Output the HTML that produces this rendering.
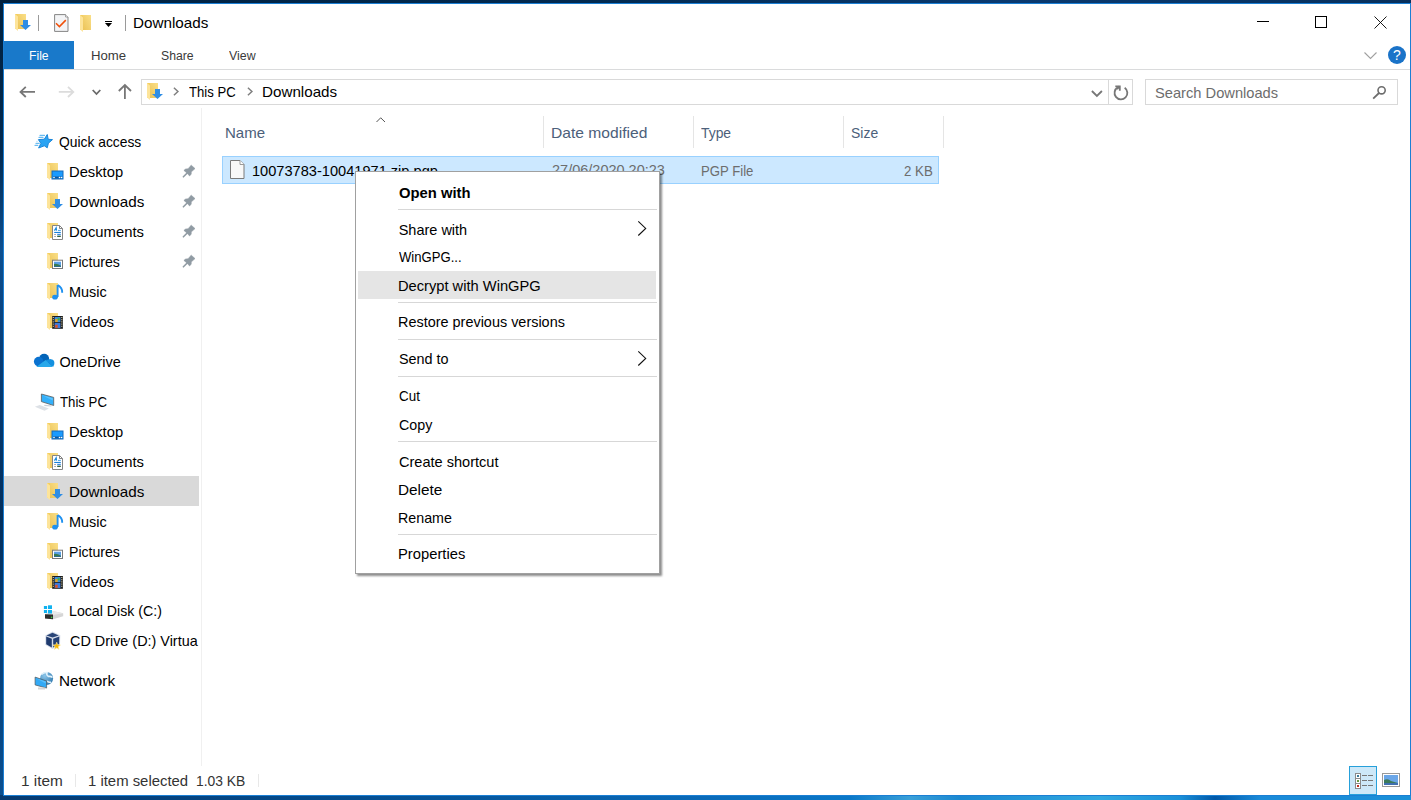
<!DOCTYPE html>
<html><head><meta charset="utf-8"><style>
html,body{margin:0;padding:0}
body{width:1411px;height:800px;overflow:hidden;position:relative;font-family:"Liberation Sans",sans-serif;
background:#02264a}
.t{position:absolute;line-height:0;white-space:nowrap}
svg{overflow:visible}
</style></head><body>
<div style="position:absolute;left:0;top:0;width:3px;height:800px;background:linear-gradient(180deg,#01213f 0px,#022a50 150px,#0d4f90 250px,#083e78 350px,#022e5c 520px,#063a70 600px,#0a4f90 800px)"></div>
<div style="position:absolute;left:0;top:0;width:1411px;height:3px;background:linear-gradient(90deg,#01213f 0px,#022a50 600px,#0a3a70 1000px,#07305c 1411px)"></div>
<div style="position:absolute;left:0;top:795px;width:1411px;height:5px;background:linear-gradient(90deg,#063a70 0px,#044a8a 300px,#0a6ab8 700px,#0a78c8 850px,#3aa0d8 910px,#1a88d0 960px,#30a8e0 1100px,#1a90d8 1180px,#0058a8 1215px,#1a8ad8 1260px,#1a90d8 1411px)"></div>
<svg width="0" height="0" style="position:absolute"><defs><linearGradient id="fgrad" x1="1" y1="0" x2="0" y2="1"><stop offset="0" stop-color="#fadf88"/><stop offset="1" stop-color="#ecc458"/></linearGradient></defs></svg>
<div style="position:absolute;left:3px;top:3px;width:1406px;height:791px;background:#fff;border:1px solid #1b7fd4"></div>
<svg style="position:absolute;left:15px;top:14px" width="17" height="18" viewBox="0 0 17 18"><rect x="0" y="0" width="11" height="15" fill="#f4cf62"/>
<rect x="3" y="0" width="8" height="15" fill="url(#fgrad)"/>
<polygon points="0,0 3,2.5 3,17 0,14.5" fill="#fde49a"/>
<polygon points="8,6 13,6 13,11 16,11 10.5,16 5,11 8,11" fill="#2f8de4"/></svg>
<div style="position:absolute;left:38px;top:15px;width:1px;height:16px;background:#9a9a9a"></div>
<svg style="position:absolute;left:54px;top:14px" width="15" height="18" viewBox="0 0 15 18"><path d="M0.6,0.6 H11.6 L14,3 V17.4 H0.6 Z" fill="#f3f4f6" stroke="#858585" stroke-width="1"/><path d="M11.6,0.6 V3 H14" fill="#fff" stroke="#858585" stroke-width="0.8"/><path d="M2,9.3 L5.4,12.6 L11.8,6.1" fill="none" stroke="#f0500a" stroke-width="1.5"/></svg>
<svg style="position:absolute;left:80px;top:15px" width="13" height="18" viewBox="0 0 13 18"><rect x="0" y="0" width="11" height="15" fill="#f4cf62"/><rect x="3" y="0" width="8" height="15" fill="url(#fgrad)"/><polygon points="0,0 3,2.5 3,17 0,14.5" fill="#fde49a"/></svg>
<div style="position:absolute;left:105px;top:21px;width:7px;height:1px;background:#000"></div>
<svg style="position:absolute;left:105px;top:23px" width="7" height="4" viewBox="0 0 7 4"><polygon points="0,0 7,0 3.5,4" fill="#000"/></svg>
<div style="position:absolute;left:125px;top:15px;width:1px;height:16px;background:#9a9a9a"></div>
<div class="t" style="left:132.81px;top:22.80px;font-size:15px;color:#000;font-weight:normal;transform:scaleX(1.0154);transform-origin:0 0;">Downloads</div>
<div style="position:absolute;left:1257px;top:21px;width:12px;height:1px;background:#000"></div>
<div style="position:absolute;left:1315px;top:16px;width:12px;height:12px;border:1px solid #000;box-sizing:border-box"></div>
<svg style="position:absolute;left:1374px;top:16px" width="13" height="13" viewBox="0 0 13 13"><path d="M0.5,0.5 L12.5,12.5 M12.5,0.5 L0.5,12.5" stroke="#000" stroke-width="0.9"/></svg>
<div style="position:absolute;left:4px;top:41px;width:70px;height:28px;background:#1979ca"></div>
<div class="t" style="left:28.72px;top:55.67px;font-size:12.5px;color:#fff;font-weight:normal;transform:scaleX(0.9738);transform-origin:0 0;">File</div>
<div class="t" style="left:90.63px;top:55.67px;font-size:12.5px;color:#3a3a3a;font-weight:normal;transform:scaleX(1.0549);transform-origin:0 0;">Home</div>
<div class="t" style="left:161.00px;top:55.67px;font-size:12.5px;color:#3a3a3a;font-weight:normal;transform:scaleX(0.9784);transform-origin:0 0;">Share</div>
<div class="t" style="left:228.66px;top:55.67px;font-size:12.5px;color:#3a3a3a;font-weight:normal;transform:scaleX(0.9896);transform-origin:0 0;">View</div>
<div style="position:absolute;left:4px;top:69px;width:1406px;height:1px;background:#dadbdc"></div>
<svg style="position:absolute;left:1364px;top:52px" width="14" height="8" viewBox="0 0 14 8"><path d="M0.5,0.5 L6.5,6.5 L12.5,0.5" fill="none" stroke="#a0a0a0" stroke-width="1.1"/></svg>
<svg style="position:absolute;left:1388px;top:46px" width="18" height="18" viewBox="0 0 18 18"><circle cx="9" cy="9" r="9" fill="#1a73c8"/><text x="9" y="14" text-anchor="middle" font-family="Liberation Sans" font-size="14" font-weight="normal" fill="#fff">?</text></svg>
<svg style="position:absolute;left:19px;top:86px" width="17" height="12" viewBox="0 0 17 12"><path d="M1.5,5.9 H16 M6.8,0.8 L1.5,5.9 L6.8,11" fill="none" stroke="#777" stroke-width="1.8"/></svg>
<svg style="position:absolute;left:58px;top:86px" width="17" height="12" viewBox="0 0 17 12"><path d="M0.8,5.9 H15.3 M10,0.8 L15.3,5.9 L10,11" fill="none" stroke="#dcdcdc" stroke-width="1.8"/></svg>
<svg style="position:absolute;left:92px;top:89px" width="9" height="7" viewBox="0 0 9 7"><path d="M0.7,1 L4.5,5 L8.3,1" fill="none" stroke="#6a6a6a" stroke-width="1.8"/></svg>
<svg style="position:absolute;left:117px;top:83px" width="15" height="16" viewBox="0 0 15 16"><path d="M7.9,16 V2 M1.8,8 L7.9,2 L14,8" fill="none" stroke="#777" stroke-width="1.8"/></svg>
<div style="position:absolute;left:141px;top:79px;width:992px;height:26px;border:1px solid #d9d9d9;box-sizing:border-box"></div>
<div style="position:absolute;left:1108px;top:79px;width:1px;height:26px;background:#d9d9d9"></div>
<svg style="position:absolute;left:147px;top:83px" width="17" height="18" viewBox="0 0 17 18"><rect x="0" y="0" width="11" height="15" fill="#f4cf62"/>
<rect x="3" y="0" width="8" height="15" fill="url(#fgrad)"/>
<polygon points="0,0 3,2.5 3,17 0,14.5" fill="#fde49a"/>
<polygon points="8,6 13,6 13,11 16,11 10.5,16 5,11 8,11" fill="#2f8de4"/></svg>
<svg style="position:absolute;left:173px;top:87px" width="6" height="9" viewBox="0 0 6 9"><path d="M0.9,0.8 L4.9,4.5 L0.9,8.2" fill="none" stroke="#808080" stroke-width="1.5"/></svg>
<div class="t" style="left:189.32px;top:91.97px;font-size:14.5px;color:#000;font-weight:normal;transform:scaleX(0.9037);transform-origin:0 0;">This PC</div>
<svg style="position:absolute;left:247px;top:87px" width="6" height="9" viewBox="0 0 6 9"><path d="M0.9,0.8 L4.9,4.5 L0.9,8.2" fill="none" stroke="#808080" stroke-width="1.5"/></svg>
<div class="t" style="left:262.44px;top:91.97px;font-size:14.5px;color:#000;font-weight:normal;transform:scaleX(1.0475);transform-origin:0 0;">Downloads</div>
<svg style="position:absolute;left:1091px;top:90px" width="12" height="8" viewBox="0 0 12 8"><path d="M0.9,1 L5.9,6 L10.9,1" fill="none" stroke="#777" stroke-width="1.8"/></svg>
<svg style="position:absolute;left:1110px;top:80px" width="22" height="22" viewBox="0 0 22 22"><path d="M14.67,7.76 A6.4,6.4 0 1 1 7.8,7.4" fill="none" stroke="#777" stroke-width="1.8"/><path d="M5.3,6.3 H9.8 V10.8" fill="none" stroke="#777" stroke-width="1.8"/><path d="M9.5,6.5 L7,9" stroke="#777" stroke-width="1.8"/></svg>
<div style="position:absolute;left:1145px;top:79px;width:253px;height:26px;border:1px solid #d9d9d9;box-sizing:border-box"></div>
<div class="t" style="left:1154.98px;top:92.77px;font-size:14.5px;color:#6d6d6d;font-weight:normal;transform:scaleX(1.0115);transform-origin:0 0;">Search Downloads</div>
<svg style="position:absolute;left:1372px;top:86px" width="14" height="14" viewBox="0 0 14 14"><circle cx="9.6" cy="4.3" r="3.6" fill="none" stroke="#6d6d6d" stroke-width="1.6"/><path d="M7,7 L1.2,12.6" stroke="#6d6d6d" stroke-width="1.8"/></svg>
<div style="position:absolute;left:201px;top:108px;width:1px;height:658px;background:#f0f0f0"></div>
<div style="position:absolute;left:4px;top:476px;width:195px;height:30px;background:#d9d9d9"></div>
<svg style="position:absolute;left:32px;top:131px" width="24" height="20" viewBox="0 0 24 20"><polygon points="15.25,3.5 16.2,8.3 20.5,8.6 16.4,12.2 15.25,16.8 12.3,14.8 6.6,17 8.9,12.4 6.4,8.6 12.3,8.2" fill="#29a3f3" stroke="#1b86d9" stroke-width="1" stroke-linejoin="round"/><path d="M8,4.4 H12.5 M7,6.4 H11 M4,12.4 H7.2 M3,14.4 H5.8" stroke="#6bbcf0" stroke-width="1.1" stroke-linecap="round"/><circle cx="5" cy="10.3" r="0.6" fill="#a8d6f5"/></svg>
<div class="t" style="left:59.15px;top:141.97px;font-size:14.5px;color:#000;font-weight:normal;transform:scaleX(0.9538);transform-origin:0 0;">Quick access</div>
<svg style="position:absolute;left:47px;top:163px" width="17" height="18" viewBox="0 0 17 18"><rect x="0" y="0" width="11" height="15" fill="#f4cf62"/>
<rect x="3" y="0" width="8" height="15" fill="url(#fgrad)"/>
<polygon points="0,0 3,2.5 3,17 0,14.5" fill="#fde49a"/>
<rect x="5" y="8" width="11" height="8" fill="#1a9bff" stroke="#1569b8" stroke-width="1"/><rect x="6" y="13.5" width="9" height="2" fill="#0f5aa0"/><circle cx="7" cy="14.5" r="0.8" fill="#fff"/><circle cx="12.5" cy="14.5" r="0.8" fill="#fff"/><circle cx="14.5" cy="14.5" r="0.8" fill="#fff"/></svg>
<div class="t" style="left:68.98px;top:171.97px;font-size:14.5px;color:#000;font-weight:normal;transform:scaleX(1.0167);transform-origin:0 0;">Desktop</div>
<svg style="position:absolute;left:176px;top:162px" width="24" height="20" viewBox="0 0 24 20"><polygon points="15.25,3.2 19,6.6 15.2,10 15.2,12.3 13.5,13.9 11.2,11.2 10,10.2 7.9,8.4 9.5,7.1 12.2,6.8 14,4.4" fill="#909ba3" stroke="#909ba3" stroke-width="0.6" stroke-linejoin="round"/><path d="M11.2,11 L7.4,14.8" stroke="#909ba3" stroke-width="1.6" stroke-linecap="round"/></svg>
<svg style="position:absolute;left:47px;top:193px" width="17" height="18" viewBox="0 0 17 18"><rect x="0" y="0" width="11" height="15" fill="#f4cf62"/>
<rect x="3" y="0" width="8" height="15" fill="url(#fgrad)"/>
<polygon points="0,0 3,2.5 3,17 0,14.5" fill="#fde49a"/>
<polygon points="8,6 13,6 13,11 16,11 10.5,16 5,11 8,11" fill="#2f8de4"/></svg>
<div class="t" style="left:68.95px;top:201.97px;font-size:14.5px;color:#000;font-weight:normal;transform:scaleX(1.0499);transform-origin:0 0;">Downloads</div>
<svg style="position:absolute;left:176px;top:192px" width="24" height="20" viewBox="0 0 24 20"><polygon points="15.25,3.2 19,6.6 15.2,10 15.2,12.3 13.5,13.9 11.2,11.2 10,10.2 7.9,8.4 9.5,7.1 12.2,6.8 14,4.4" fill="#909ba3" stroke="#909ba3" stroke-width="0.6" stroke-linejoin="round"/><path d="M11.2,11 L7.4,14.8" stroke="#909ba3" stroke-width="1.6" stroke-linecap="round"/></svg>
<svg style="position:absolute;left:47px;top:223px" width="17" height="18" viewBox="0 0 17 18"><rect x="0" y="0" width="11" height="15" fill="#f4cf62"/>
<rect x="3" y="0" width="8" height="15" fill="url(#fgrad)"/>
<polygon points="0,0 3,2.5 3,17 0,14.5" fill="#fde49a"/>
<path d="M5.5,2.5 H12.5 L15.5,5.5 V16.5 H5.5 Z" fill="#fff" stroke="#858585"/><path d="M12.5,2.5 V5.5 H15.5" fill="none" stroke="#858585"/><path d="M7.4,7.6 L9.2,4.6 L9.6,7.6 M8,6.6 H10" stroke="#1e8ad8" stroke-width="1.1" fill="none"/><rect x="11" y="6.9" width="2.8" height="1" fill="#40a0e8"/><rect x="7.2" y="8.9" width="6.6" height="1.1" fill="#1a80d8"/><rect x="7.2" y="11" width="1.7" height="1" fill="#a0a0a0"/><rect x="7.2" y="13" width="1.7" height="1" fill="#a0a0a0"/><rect x="10.2" y="10.8" width="3.6" height="1.2" fill="#3a8ae8"/><rect x="10.2" y="12.6" width="3.6" height="1.4" fill="#2f5f40"/></svg>
<div class="t" style="left:68.98px;top:231.97px;font-size:14.5px;color:#000;font-weight:normal;transform:scaleX(1.0218);transform-origin:0 0;">Documents</div>
<svg style="position:absolute;left:176px;top:222px" width="24" height="20" viewBox="0 0 24 20"><polygon points="15.25,3.2 19,6.6 15.2,10 15.2,12.3 13.5,13.9 11.2,11.2 10,10.2 7.9,8.4 9.5,7.1 12.2,6.8 14,4.4" fill="#909ba3" stroke="#909ba3" stroke-width="0.6" stroke-linejoin="round"/><path d="M11.2,11 L7.4,14.8" stroke="#909ba3" stroke-width="1.6" stroke-linecap="round"/></svg>
<svg style="position:absolute;left:47px;top:253px" width="17" height="18" viewBox="0 0 17 18"><rect x="0" y="0" width="11" height="15" fill="#f4cf62"/>
<rect x="3" y="0" width="8" height="15" fill="url(#fgrad)"/>
<polygon points="0,0 3,2.5 3,17 0,14.5" fill="#fde49a"/>
<rect x="5.5" y="7.2" width="10" height="8.3" fill="#fff" stroke="#7a7a7a"/><rect x="7" y="8.7" width="7" height="5.3" fill="#5aa0e6"/><path d="M7,11 Q9.5,10 14,12.8 V14 H7 Z" fill="#3a7a50"/><rect x="7" y="13.2" width="7" height="0.8" fill="#2a6a9a"/></svg>
<div class="t" style="left:69.03px;top:261.97px;font-size:14.5px;color:#000;font-weight:normal;transform:scaleX(0.9713);transform-origin:0 0;">Pictures</div>
<svg style="position:absolute;left:176px;top:252px" width="24" height="20" viewBox="0 0 24 20"><polygon points="15.25,3.2 19,6.6 15.2,10 15.2,12.3 13.5,13.9 11.2,11.2 10,10.2 7.9,8.4 9.5,7.1 12.2,6.8 14,4.4" fill="#909ba3" stroke="#909ba3" stroke-width="0.6" stroke-linejoin="round"/><path d="M11.2,11 L7.4,14.8" stroke="#909ba3" stroke-width="1.6" stroke-linecap="round"/></svg>
<svg style="position:absolute;left:47px;top:283px" width="17" height="18" viewBox="0 0 17 18"><rect x="0" y="0" width="11" height="15" fill="#f4cf62"/>
<rect x="3" y="0" width="8" height="15" fill="url(#fgrad)"/>
<polygon points="0,0 3,2.5 3,17 0,14.5" fill="#fde49a"/>
<path d="M10.6,2 V14" stroke="#1e90f0" stroke-width="1.9"/><ellipse cx="8" cy="14.2" rx="2.8" ry="2.4" fill="#1e90f0"/><path d="M10.6,2.2 Q15.5,4.5 15.2,9.8" stroke="#1e90f0" stroke-width="1.9" fill="none"/></svg>
<div class="t" style="left:69.00px;top:291.97px;font-size:14.5px;color:#000;font-weight:normal;transform:scaleX(0.9967);transform-origin:0 0;">Music</div>
<svg style="position:absolute;left:47px;top:313px" width="17" height="18" viewBox="0 0 17 18"><rect x="0" y="0" width="11" height="15" fill="#f4cf62"/>
<rect x="3" y="0" width="8" height="15" fill="url(#fgrad)"/>
<polygon points="0,0 3,2.5 3,17 0,14.5" fill="#fde49a"/>
<rect x="5.2" y="3" width="10.7" height="12.8" fill="#1e1e1e"/><rect x="7.6" y="4" width="5.8" height="5.2" fill="#3a8ae0"/><rect x="8.2" y="6" width="2.5" height="3" fill="#e0a020"/><rect x="10.7" y="4.8" width="2" height="2.5" fill="#40b040"/><rect x="7.6" y="10" width="5.8" height="5" fill="#3a7ae0"/><rect x="8.2" y="11.8" width="2.5" height="3" fill="#e05020"/><path d="M6.3,4 V15 M14.8,4 V15" stroke="#e8e0b0" stroke-width="1" stroke-dasharray="1,1.2"/></svg>
<div class="t" style="left:70.00px;top:321.97px;font-size:14.5px;color:#000;font-weight:normal;transform:scaleX(0.9963);transform-origin:0 0;">Videos</div>
<svg style="position:absolute;left:30px;top:348px" width="26" height="22" viewBox="0 0 26 22"><circle cx="14.1" cy="10.9" r="5.1" fill="#0364b8"/><circle cx="8.7" cy="13.6" r="4.8" fill="#0a72d0"/><circle cx="20.6" cy="15" r="3.8" fill="#1490df"/><rect x="8.5" y="14" width="12" height="4.9" fill="#0a72d0"/><path d="M15.6,11.9 L20.6,11.2 L23.4,15 L23.4,18.9 Z" fill="#1490df"/><path d="M15.6,11.9 L6.2,18.9 H22.6 Z" fill="#28a8ea"/></svg>
<div class="t" style="left:59.51px;top:361.97px;font-size:14.5px;color:#000;font-weight:normal;">OneDrive</div>
<svg style="position:absolute;left:34px;top:393px" width="22" height="19" viewBox="0 0 22 19"><path d="M0.9,13.8 L5.7,11.9 L14.8,15.5 L10.6,17.7 Z" fill="#dde1e6"/><path d="M10.3,11.8 L17.4,12.6 V13.6 L10.3,13 Z" fill="#c9d0d8"/><path d="M7.4,1 L19.7,4.4 V12.5 L7.4,8.6 Z" fill="#33b0fa" stroke="#5a5a5a" stroke-width="0.8" stroke-linejoin="round"/><path d="M8.4,2.3 L18.8,5.2 V7.5 Z" fill="#5cc4ff"/></svg>
<div class="t" style="left:59.51px;top:401.97px;font-size:14.5px;color:#000;font-weight:normal;transform:scaleX(0.9099);transform-origin:0 0;">This PC</div>
<svg style="position:absolute;left:47px;top:423px" width="17" height="18" viewBox="0 0 17 18"><rect x="0" y="0" width="11" height="15" fill="#f4cf62"/>
<rect x="3" y="0" width="8" height="15" fill="url(#fgrad)"/>
<polygon points="0,0 3,2.5 3,17 0,14.5" fill="#fde49a"/>
<rect x="5" y="8" width="11" height="8" fill="#1a9bff" stroke="#1569b8" stroke-width="1"/><rect x="6" y="13.5" width="9" height="2" fill="#0f5aa0"/><circle cx="7" cy="14.5" r="0.8" fill="#fff"/><circle cx="12.5" cy="14.5" r="0.8" fill="#fff"/><circle cx="14.5" cy="14.5" r="0.8" fill="#fff"/></svg>
<div class="t" style="left:68.98px;top:431.97px;font-size:14.5px;color:#000;font-weight:normal;transform:scaleX(1.0167);transform-origin:0 0;">Desktop</div>
<svg style="position:absolute;left:47px;top:453px" width="17" height="18" viewBox="0 0 17 18"><rect x="0" y="0" width="11" height="15" fill="#f4cf62"/>
<rect x="3" y="0" width="8" height="15" fill="url(#fgrad)"/>
<polygon points="0,0 3,2.5 3,17 0,14.5" fill="#fde49a"/>
<path d="M5.5,2.5 H12.5 L15.5,5.5 V16.5 H5.5 Z" fill="#fff" stroke="#858585"/><path d="M12.5,2.5 V5.5 H15.5" fill="none" stroke="#858585"/><path d="M7.4,7.6 L9.2,4.6 L9.6,7.6 M8,6.6 H10" stroke="#1e8ad8" stroke-width="1.1" fill="none"/><rect x="11" y="6.9" width="2.8" height="1" fill="#40a0e8"/><rect x="7.2" y="8.9" width="6.6" height="1.1" fill="#1a80d8"/><rect x="7.2" y="11" width="1.7" height="1" fill="#a0a0a0"/><rect x="7.2" y="13" width="1.7" height="1" fill="#a0a0a0"/><rect x="10.2" y="10.8" width="3.6" height="1.2" fill="#3a8ae8"/><rect x="10.2" y="12.6" width="3.6" height="1.4" fill="#2f5f40"/></svg>
<div class="t" style="left:68.98px;top:461.97px;font-size:14.5px;color:#000;font-weight:normal;transform:scaleX(1.0218);transform-origin:0 0;">Documents</div>
<svg style="position:absolute;left:47px;top:483px" width="17" height="18" viewBox="0 0 17 18"><rect x="0" y="0" width="11" height="15" fill="#f4cf62"/>
<rect x="3" y="0" width="8" height="15" fill="url(#fgrad)"/>
<polygon points="0,0 3,2.5 3,17 0,14.5" fill="#fde49a"/>
<polygon points="8,6 13,6 13,11 16,11 10.5,16 5,11 8,11" fill="#2f8de4"/></svg>
<div class="t" style="left:68.95px;top:491.97px;font-size:14.5px;color:#000;font-weight:normal;transform:scaleX(1.0499);transform-origin:0 0;">Downloads</div>
<svg style="position:absolute;left:47px;top:513px" width="17" height="18" viewBox="0 0 17 18"><rect x="0" y="0" width="11" height="15" fill="#f4cf62"/>
<rect x="3" y="0" width="8" height="15" fill="url(#fgrad)"/>
<polygon points="0,0 3,2.5 3,17 0,14.5" fill="#fde49a"/>
<path d="M10.6,2 V14" stroke="#1e90f0" stroke-width="1.9"/><ellipse cx="8" cy="14.2" rx="2.8" ry="2.4" fill="#1e90f0"/><path d="M10.6,2.2 Q15.5,4.5 15.2,9.8" stroke="#1e90f0" stroke-width="1.9" fill="none"/></svg>
<div class="t" style="left:69.00px;top:521.97px;font-size:14.5px;color:#000;font-weight:normal;transform:scaleX(0.9967);transform-origin:0 0;">Music</div>
<svg style="position:absolute;left:47px;top:543px" width="17" height="18" viewBox="0 0 17 18"><rect x="0" y="0" width="11" height="15" fill="#f4cf62"/>
<rect x="3" y="0" width="8" height="15" fill="url(#fgrad)"/>
<polygon points="0,0 3,2.5 3,17 0,14.5" fill="#fde49a"/>
<rect x="5.5" y="7.2" width="10" height="8.3" fill="#fff" stroke="#7a7a7a"/><rect x="7" y="8.7" width="7" height="5.3" fill="#5aa0e6"/><path d="M7,11 Q9.5,10 14,12.8 V14 H7 Z" fill="#3a7a50"/><rect x="7" y="13.2" width="7" height="0.8" fill="#2a6a9a"/></svg>
<div class="t" style="left:69.03px;top:551.97px;font-size:14.5px;color:#000;font-weight:normal;transform:scaleX(0.9713);transform-origin:0 0;">Pictures</div>
<svg style="position:absolute;left:47px;top:573px" width="17" height="18" viewBox="0 0 17 18"><rect x="0" y="0" width="11" height="15" fill="#f4cf62"/>
<rect x="3" y="0" width="8" height="15" fill="url(#fgrad)"/>
<polygon points="0,0 3,2.5 3,17 0,14.5" fill="#fde49a"/>
<rect x="5.2" y="3" width="10.7" height="12.8" fill="#1e1e1e"/><rect x="7.6" y="4" width="5.8" height="5.2" fill="#3a8ae0"/><rect x="8.2" y="6" width="2.5" height="3" fill="#e0a020"/><rect x="10.7" y="4.8" width="2" height="2.5" fill="#40b040"/><rect x="7.6" y="10" width="5.8" height="5" fill="#3a7ae0"/><rect x="8.2" y="11.8" width="2.5" height="3" fill="#e05020"/><path d="M6.3,4 V15 M14.8,4 V15" stroke="#e8e0b0" stroke-width="1" stroke-dasharray="1,1.2"/></svg>
<div class="t" style="left:70.00px;top:581.97px;font-size:14.5px;color:#000;font-weight:normal;transform:scaleX(0.9963);transform-origin:0 0;">Videos</div>
<svg style="position:absolute;left:43px;top:605px" width="22" height="16" viewBox="0 0 22 16"><polygon points="2,9.2 8.5,5.8 20.2,8.2 20.2,11.2 10,14.2 2,13.6" fill="#d6d6d6"/><polygon points="2,9.2 8.5,5.8 20.2,8.2 10,10" fill="#e9e9e9"/><polygon points="2,9.2 10,9.6 10,14.2 2,13.6" fill="#2e2e2e"/><circle cx="8.6" cy="12.4" r="0.8" fill="#3ccf3c"/><rect x="0.9" y="1" width="3.2" height="3" fill="#10b2f0"/><rect x="5" y="0.3" width="4" height="3.7" fill="#10b2f0"/><rect x="0.9" y="5" width="3.2" height="3" fill="#10b2f0"/><rect x="5" y="5" width="4" height="3.5" fill="#10b2f0"/></svg>
<div class="t" style="left:68.59px;top:611.47px;font-size:14.5px;color:#000;font-weight:normal;transform:scaleX(0.9776);transform-origin:0 0;">Local Disk (C:)</div>
<svg style="position:absolute;left:42px;top:628px" width="24" height="24" viewBox="0 0 24 24"><polygon points="10.5,3.6 18.3,7.2 18,16.8 10.5,21 3.3,16.8 3.3,7.5" fill="#d5dce8"/><polygon points="10.5,4.8 16.8,7.5 10.5,9.6 4.4,7.6" fill="#2a4577"/><polygon points="4.2,8.6 9.8,10.8 9.8,19.6 4.2,16.2" fill="#1f3a6e"/><polygon points="11.2,10.8 17.3,8.4 17.1,16.3 11.2,19.6" fill="#243f73"/><polygon points="14.70,14.20 15.70,16.82 18.50,16.96 16.32,18.73 17.05,21.44 14.70,19.90 12.35,21.44 13.08,18.73 10.90,16.96 13.70,16.82" fill="#f5b400" stroke="#fff2b0" stroke-width="0.6"/></svg>
<div class="t" style="left:69.58px;top:641.47px;font-size:14.5px;color:#000;font-weight:normal;transform:scaleX(0.9925);transform-origin:0 0;">CD Drive (D:) Virtua</div>
<svg style="position:absolute;left:32px;top:668px" width="26" height="26" viewBox="0 0 26 26"><defs><radialGradient id="glb" cx="0.35" cy="0.3" r="0.8"><stop offset="0" stop-color="#8cc6ea"/><stop offset="1" stop-color="#2f78ad"/></radialGradient></defs><circle cx="14.6" cy="10.4" r="6.5" fill="url(#glb)"/><path d="M9.5,6.5 Q12,4.2 15,4.6 Q14,7 16.5,8.5 Q19,8 20.5,9.5 M15,13 Q17,15 19,14" stroke="#e2f2fb" stroke-width="1.5" fill="none"/><polygon points="3.1,9.1 14.6,13 14.6,20.1 3.1,16.9" fill="#33aaf6" stroke="#555" stroke-width="0.7"/><path d="M4,10.3 L13.7,13.6 V15.5 Z" fill="#5cc0fb"/><rect x="6" y="19.5" width="7" height="2" fill="#d5d5d5"/></svg>
<div class="t" style="left:58.53px;top:681.22px;font-size:14.5px;color:#000;font-weight:normal;transform:scaleX(1.0553);transform-origin:0 0;">Network</div>
<div class="t" style="left:224.97px;top:132.87px;font-size:14.5px;color:#4c607a;font-weight:normal;transform:scaleX(1.0375);transform-origin:0 0;">Name</div>
<svg style="position:absolute;left:376px;top:117px" width="10" height="6" viewBox="0 0 10 6"><path d="M0.5,5 L4.7,0.8 L9,5" fill="none" stroke="#555" stroke-width="1"/></svg>
<div style="position:absolute;left:543px;top:116px;width:1px;height:32px;background:#e5e5e5"></div>
<div style="position:absolute;left:693px;top:116px;width:1px;height:32px;background:#e5e5e5"></div>
<div style="position:absolute;left:843px;top:116px;width:1px;height:32px;background:#e5e5e5"></div>
<div style="position:absolute;left:943px;top:116px;width:1px;height:32px;background:#e5e5e5"></div>
<div class="t" style="left:550.92px;top:132.57px;font-size:14.5px;color:#4c607a;font-weight:normal;transform:scaleX(1.0766);transform-origin:0 0;">Date modified</div>
<div class="t" style="left:701.49px;top:132.57px;font-size:14.5px;color:#4c607a;font-weight:normal;transform:scaleX(0.9572);transform-origin:0 0;">Type</div>
<div class="t" style="left:850.98px;top:132.87px;font-size:14.5px;color:#4c607a;font-weight:normal;transform:scaleX(0.9622);transform-origin:0 0;">Size</div>
<div style="position:absolute;left:222px;top:156px;width:717px;height:28px;background:#cce8ff;border:1px solid #99d1ff;box-sizing:border-box"></div>
<svg style="position:absolute;left:230px;top:160px" width="15" height="19" viewBox="0 0 15 19"><path d="M0.5,0.5 H10 L14,4.5 V18.5 H0.5 Z" fill="#f8f8f8" stroke="#7a7a7a"/><path d="M10,0.5 V4.5 H14" fill="#fff" stroke="#9a9a9a"/></svg>
<div class="t" style="left:252.19px;top:170.67px;font-size:14.5px;color:#000;font-weight:normal;transform:scaleX(1.0067);transform-origin:0 0;">10073783-10041971.zip.pgp</div>
<div class="t" style="left:552.00px;top:170.47px;font-size:14.5px;color:#6d6d6d;font-weight:normal;">27/06/2020 20:23</div>
<div class="t" style="left:700.59px;top:170.57px;font-size:14.5px;color:#6d6d6d;font-weight:normal;transform:scaleX(0.9075);transform-origin:0 0;">PGP File</div>
<div class="t" style="left:904.32px;top:170.87px;font-size:14.5px;color:#6d6d6d;font-weight:normal;transform:scaleX(0.9152);transform-origin:0 0;">2 KB</div>
<div class="t" style="left:21.12px;top:780.67px;font-size:14.5px;color:#333;font-weight:normal;transform:scaleX(1.0593);transform-origin:0 0;">1 item</div>
<div style="position:absolute;left:75px;top:774px;width:1px;height:13px;background:#e8e8e8"></div>
<div class="t" style="left:88.15px;top:780.67px;font-size:14.5px;color:#333;font-weight:normal;transform:scaleX(1.0266);transform-origin:0 0;">1 item selected</div>
<div class="t" style="left:196.19px;top:780.67px;font-size:14.5px;color:#333;font-weight:normal;transform:scaleX(0.9547);transform-origin:0 0;">1.03 KB</div>
<div style="position:absolute;left:258px;top:774px;width:1px;height:13px;background:#e8e8e8"></div>
<div style="position:absolute;left:1349px;top:766px;width:28px;height:29px;background:#cde8f8;border:1px solid #26a0da;box-sizing:border-box"></div>
<svg style="position:absolute;left:1355px;top:773px" width="19" height="16" viewBox="0 0 19 16"><rect x="0.5" y="0.5" width="5" height="15" fill="#fff" stroke="#8a8a8a"/><path d="M0.5,5.5 H5.5 M0.5,10.5 H5.5" stroke="#8a8a8a"/><rect x="2" y="2" width="2" height="2" fill="#3a7a9a"/><rect x="2" y="7" width="2" height="2" fill="#6a9a40"/><rect x="2" y="12" width="2" height="2" fill="#c03020"/><path d="M7,2.5 H12 M13,2.5 H18 M7,7.5 H12 M13,7.5 H18 M7,12.5 H12 M13,12.5 H18" stroke="#777" stroke-width="1"/></svg>
<svg style="position:absolute;left:1382px;top:773px" width="18" height="14" viewBox="0 0 18 14"><rect x="0.5" y="0.5" width="17" height="13" fill="#fff" stroke="#999"/><rect x="2" y="2" width="14" height="10" fill="#6aa6e8"/><path d="M2,7 Q6,5 9,8 Q12,9 16,10 V12 H2 Z" fill="#3b7a5a"/><rect x="2" y="10" width="14" height="2" fill="#3f6fb0"/></svg>
<div style="position:absolute;left:355px;top:171px;width:305px;height:403px;background:#fff;border:1px solid #a0a0a0;box-sizing:border-box;box-shadow:2px 2px 2px rgba(0,0,0,0.45)"></div>
<div style="position:absolute;left:358px;top:271px;width:298px;height:28px;background:#e5e5e5"></div>
<div class="t" style="left:398.68px;top:192.67px;font-size:14.5px;color:#000;font-weight:bold;transform:scaleX(1.0208);transform-origin:0 0;">Open with</div>
<div class="t" style="left:398.68px;top:229.72px;font-size:14.5px;color:#000;font-weight:normal;">Share with</div>
<div class="t" style="left:398.68px;top:257.47px;font-size:14.5px;color:#000;font-weight:normal;transform:scaleX(0.9034);transform-origin:0 0;">WinGPG...</div>
<div class="t" style="left:397.67px;top:285.67px;font-size:14.5px;color:#000;font-weight:normal;transform:scaleX(1.0118);transform-origin:0 0;">Decrypt with WinGPG</div>
<div class="t" style="left:397.68px;top:322.47px;font-size:14.5px;color:#000;font-weight:normal;transform:scaleX(0.9956);transform-origin:0 0;">Restore previous versions</div>
<div class="t" style="left:398.68px;top:359.47px;font-size:14.5px;color:#000;font-weight:normal;transform:scaleX(0.9914);transform-origin:0 0;">Send to</div>
<div class="t" style="left:398.68px;top:396.47px;font-size:14.5px;color:#000;font-weight:normal;transform:scaleX(0.9241);transform-origin:0 0;">Cut</div>
<div class="t" style="left:398.68px;top:424.67px;font-size:14.5px;color:#000;font-weight:normal;transform:scaleX(0.9835);transform-origin:0 0;">Copy</div>
<div class="t" style="left:398.68px;top:461.97px;font-size:14.5px;color:#000;font-weight:normal;transform:scaleX(1.0039);transform-origin:0 0;">Create shortcut</div>
<div class="t" style="left:397.62px;top:489.77px;font-size:14.5px;color:#000;font-weight:normal;transform:scaleX(1.0568);transform-origin:0 0;">Delete</div>
<div class="t" style="left:397.70px;top:517.77px;font-size:14.5px;color:#000;font-weight:normal;transform:scaleX(0.9830);transform-origin:0 0;">Rename</div>
<div class="t" style="left:397.66px;top:553.97px;font-size:14.5px;color:#000;font-weight:normal;transform:scaleX(1.0177);transform-origin:0 0;">Properties</div>
<div style="position:absolute;left:398px;top:209px;width:259px;height:1px;background:#d7d7d7"></div>
<div style="position:absolute;left:398px;top:302px;width:259px;height:1px;background:#d7d7d7"></div>
<div style="position:absolute;left:398px;top:339px;width:259px;height:1px;background:#d7d7d7"></div>
<div style="position:absolute;left:398px;top:376px;width:259px;height:1px;background:#d7d7d7"></div>
<div style="position:absolute;left:398px;top:441px;width:259px;height:1px;background:#d7d7d7"></div>
<div style="position:absolute;left:398px;top:534px;width:259px;height:1px;background:#d7d7d7"></div>
<svg style="position:absolute;left:638px;top:221px" width="9" height="15" viewBox="0 0 9 15"><path d="M0.3,0.3 L7.7,7.4 L0.3,14.5" fill="none" stroke="#111" stroke-width="1.1"/></svg>
<svg style="position:absolute;left:638px;top:351px" width="9" height="15" viewBox="0 0 9 15"><path d="M0.3,0.3 L7.7,7.4 L0.3,14.5" fill="none" stroke="#111" stroke-width="1.1"/></svg>
</body></html>
